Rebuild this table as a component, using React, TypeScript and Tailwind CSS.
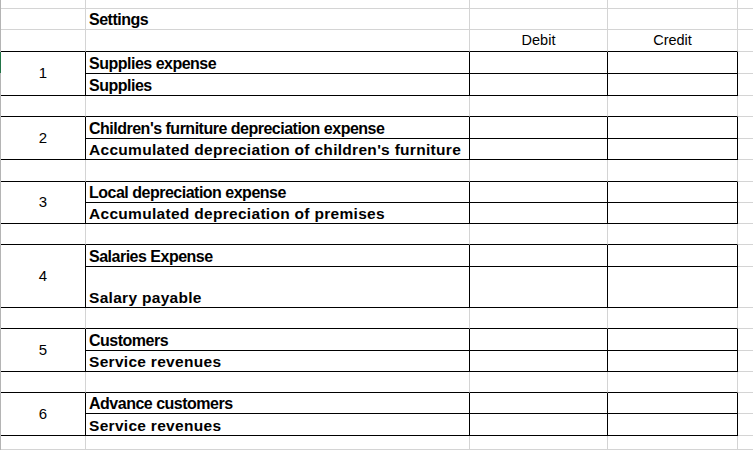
import React from 'react';

type Line = { text: string; h: number; wide?: boolean };
type Entry = { n: number; lines: Line[]; gapAfter: number };

const HEIGHT: Record<number, string> = {
  9: 'h-[9px]',
  14: 'h-[14px]',
  21: 'h-[21px]',
  22: 'h-[22px]',
  41: 'h-[41px]',
};

const entries: Entry[] = [
  {
    n: 1,
    lines: [
      { text: 'Supplies expense', h: 22 },
      { text: 'Supplies', h: 22 },
    ],
    gapAfter: 21,
  },
  {
    n: 2,
    lines: [
      { text: "Children's furniture depreciation expense", h: 22 },
      { text: "Accumulated depreciation of children's furniture", h: 21, wide: true },
    ],
    gapAfter: 22,
  },
  {
    n: 3,
    lines: [
      { text: 'Local depreciation expense', h: 21 },
      { text: 'Accumulated depreciation of premises', h: 21, wide: true },
    ],
    gapAfter: 21,
  },
  {
    n: 4,
    lines: [
      { text: 'Salaries Expense', h: 22 },
      { text: 'Salary payable', h: 41, wide: true },
    ],
    gapAfter: 21,
  },
  {
    n: 5,
    lines: [
      { text: 'Customers', h: 22 },
      { text: 'Service revenues', h: 21, wide: true },
    ],
    gapAfter: 21,
  },
  {
    n: 6,
    lines: [
      { text: 'Advance customers', h: 21 },
      { text: 'Service revenues', h: 22, wide: true },
    ],
    gapAfter: 14,
  },
];

// plain row of the sheet; darkBottom draws the top edge of the next bordered block
const SheetRow: React.FC<{
  h: number;
  darkBottom?: boolean;
  label?: React.ReactNode;
  debit?: string;
  credit?: string;
}> = ({ h, darkBottom, label, debit, credit }) => {
  const b = darkBottom ? 'border-b-black' : 'border-b-[#d4d4d4]';
  return (
    <div className={`flex ${HEIGHT[h]}`}>
      <div className={`w-[85px] shrink-0 border-r border-b border-r-[#d4d4d4] ${b}`} />
      <div
        className={`w-[384px] shrink-0 border-r border-b border-r-[#d4d4d4] ${b} flex items-end pl-[3px] pb-[1px] text-[16px] leading-[17px] tracking-[-0.5px] font-bold whitespace-nowrap`}
      >
        {label}
      </div>
      <div
        className={`w-[138px] shrink-0 border-r border-b border-r-[#d4d4d4] ${b} flex items-end justify-center pb-[2px] text-[14.5px] leading-[17px]`}
      >
        {debit}
      </div>
      <div
        className={`w-[130px] shrink-0 border-r border-b border-r-[#d4d4d4] ${b} flex items-end justify-center pb-[2px] text-[14.5px] leading-[17px]`}
      >
        {credit}
      </div>
      <div className="flex-1 border-b border-[#d4d4d4]" />
    </div>
  );
};

const Block: React.FC<{ entry: Entry }> = ({ entry }) => (
  <div className="flex">
    <div className="w-[85px] shrink-0 border-r border-b border-black flex items-center justify-center text-[15px]">
      {entry.n}
    </div>
    <div className="flex-1 flex flex-col">
      {entry.lines.map((line, i) => (
        <div key={i} className={`flex ${HEIGHT[line.h]}`}>
          <div
            className={`w-[384px] shrink-0 border-r border-b border-black flex items-end pl-[3px] pb-[1px] leading-[17px] font-bold whitespace-nowrap ${
              line.wide ? 'text-[15.5px] tracking-[0.3px]' : 'text-[16px] tracking-[-0.5px]'
            }`}
          >
            {line.text}
          </div>
          <div className="w-[138px] shrink-0 border-r border-b border-black" />
          <div className="w-[130px] shrink-0 border-r border-b border-black" />
          <div className="flex-1 border-b border-[#d4d4d4]" />
        </div>
      ))}
    </div>
  </div>
);

const App: React.FC = () => {
  return (
    <div className="relative w-[753px] h-[450px] overflow-hidden bg-white text-black font-['Liberation_Sans',Arial,sans-serif]">
      <div className="border-l border-[#b4b4b4]">
        <SheetRow h={9} />
        <SheetRow h={21} label="Settings" />
        <SheetRow h={22} darkBottom debit="Debit" credit="Credit" />
        {entries.map((entry, i) => (
          <React.Fragment key={entry.n}>
            <Block entry={entry} />
            <SheetRow h={entry.gapAfter} darkBottom={i < entries.length - 1} />
          </React.Fragment>
        ))}
      </div>
      {/* active row marker */}
      <div className="absolute left-0 top-[52px] h-[21px] w-[1px] bg-[#217346]" />
    </div>
  );
};

export default App;
